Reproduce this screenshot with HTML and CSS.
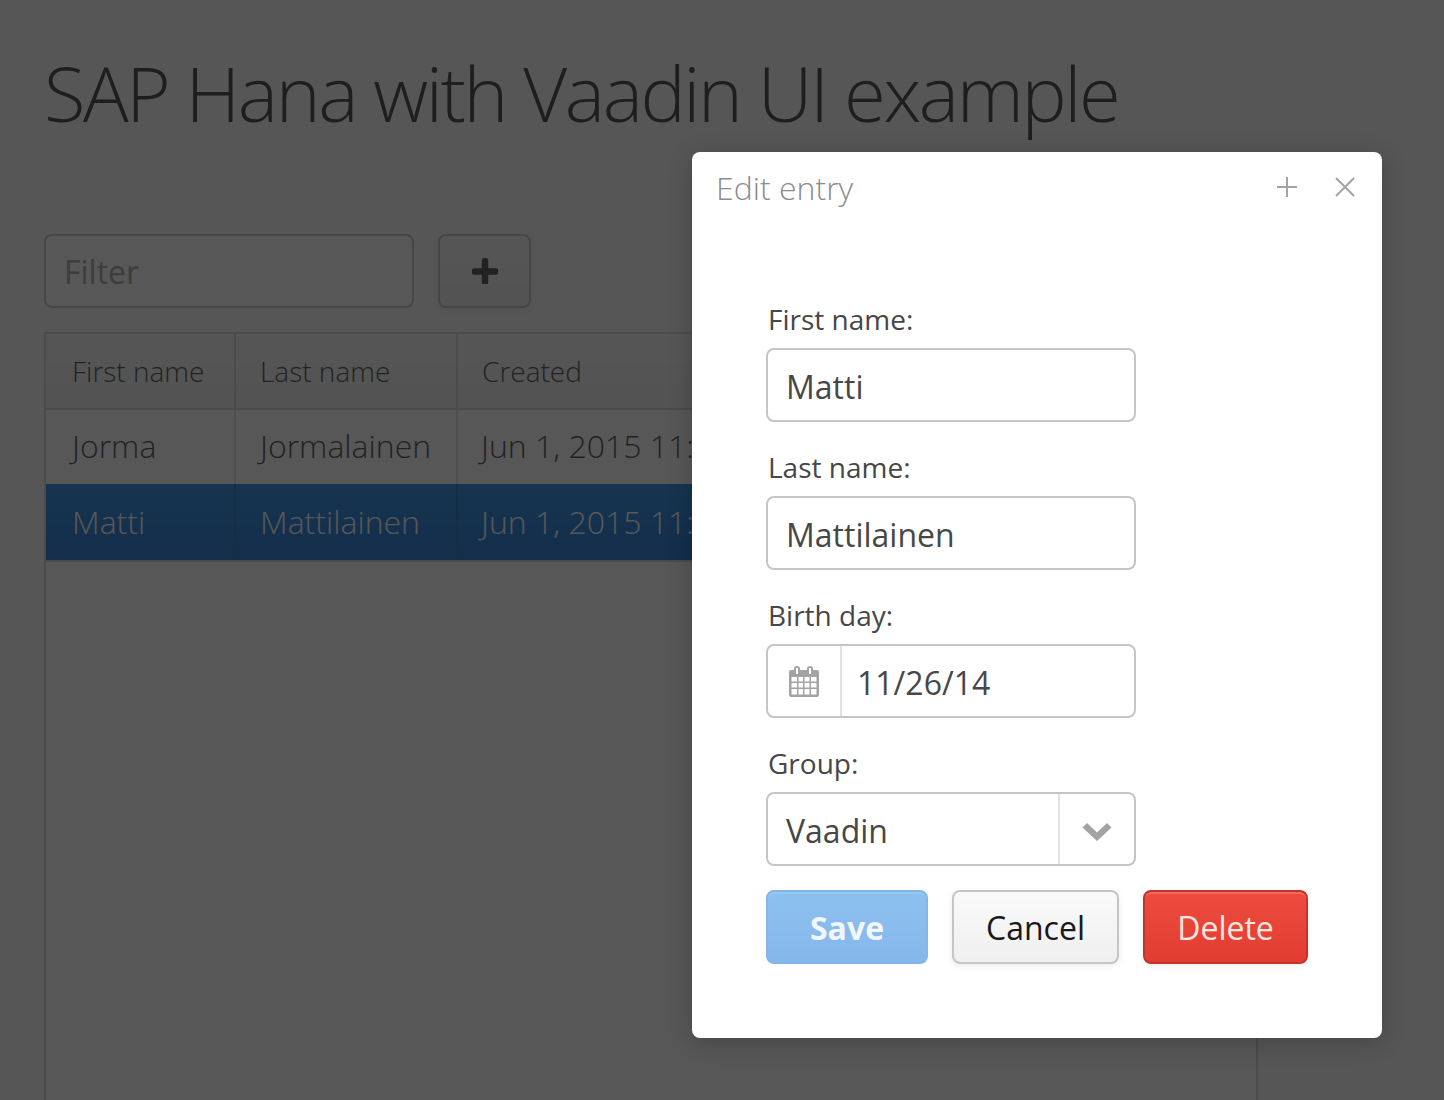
FILE: index.html
```html
<!DOCTYPE html>
<html lang="en">
<head>
<meta charset="utf-8">
<title>SAP Hana with Vaadin UI example</title>
<link rel="stylesheet" href="styles.css">
</head>
<body>
<main class="page">
  <h1 class="title">SAP Hana with Vaadin UI example</h1>
  <div class="toolbar">
    <div class="filter">Filter</div>
    <div class="add-btn">
      <svg width="26" height="26" viewBox="0 0 26 26"><path d="M13 3V24M2.500 13.500H23.500" fill="none" stroke="#474747" stroke-width="6.500" stroke-linecap="round"/></svg>
    </div>
  </div>
  <div class="table">
    <div class="row head">
      <div class="cell c1">First name</div><div class="cell c2">Last name</div><div class="cell c3">Created</div>
    </div>
    <div class="row body-row">
      <div class="cell c1">Jorma</div><div class="cell c2">Jormalainen</div><div class="cell c3">Jun 1, 2015 11:28:14 AM</div>
    </div>
    <div class="row body-row selected">
      <div class="cell c1">Matti</div><div class="cell c2">Mattilainen</div><div class="cell c3">Jun 1, 2015 11:28:14 AM</div>
    </div>
  </div>
</main>
<div class="curtain"></div>
<section class="dialog">
  <header class="dialog-head">
    <div class="dialog-title">Edit entry</div>
    <div class="dialog-tools">
      <svg width="22" height="22" viewBox="0 0 22 22"><path d="M11 1V21M1 11H21" fill="none" stroke="#a3a3a3" stroke-width="2"/></svg>
      <svg width="22" height="22" viewBox="0 0 22 22"><path d="M2 2L20 20M20 2L2 20" fill="none" stroke="#a3a3a3" stroke-width="2"/></svg>
    </div>
  </header>
  <div class="form">
    <div class="field">
      <div class="label">First name:</div>
      <div class="input"><span class="value">Matti</span></div>
    </div>
    <div class="field">
      <div class="label">Last name:</div>
      <div class="input"><span class="value">Mattilainen</span></div>
    </div>
    <div class="field">
      <div class="label">Birth day:</div>
      <div class="input date">
        <div class="date-btn">
          <svg width="30" height="31" viewBox="0 0 30 31">
            <path fill="#a3a3a3" d="M2 4H28A2 2 0 0 1 30 6V29A2 2 0 0 1 28 31H2A2 2 0 0 1 0 29V6A2 2 0 0 1 2 4Z"/>
            <rect x="5" y="0" width="6" height="9" rx="3" fill="#a3a3a3"/>
            <rect x="18" y="0" width="6" height="9" rx="3" fill="#a3a3a3"/>
            <rect x="7" y="2" width="2" height="6" fill="#fff"/>
            <rect x="20" y="2" width="2" height="6" fill="#fff"/>
            <path fill="#fff" d="M2.500 11H8V15.500H2.500ZM9.500 11H14V15.500H9.500ZM15.500 11H20.500V15.500H15.500ZM22 11H27.500V15.500H22ZM2.500 17H8V21.500H2.500ZM9.500 17H14V21.500H9.500ZM15.500 17H20.500V21.500H15.500ZM22 17H27.500V21.500H22ZM2.500 23H8V28.500H2.500ZM9.500 23H14V28.500H9.500ZM15.500 23H20.500V28.500H15.500ZM22 23H27.500V28.500H22Z"/>
          </svg>
        </div>
        <span class="value date-value">11/26/14</span>
      </div>
    </div>
    <div class="field">
      <div class="label">Group:</div>
      <div class="input select">
        <span class="value select-value">Vaadin</span>
        <div class="select-btn">
          <svg class="chevron" width="30" height="20" viewBox="0 0 30 20"><path d="M0.500 6.500L5 2L15 11.500L25 2L29.500 6.500L15 20Z" fill="#a3a3a3"/></svg>
        </div>
      </div>
    </div>
    <div class="actions">
      <div class="btn save">Save</div>
      <div class="btn cancel">Cancel</div>
      <div class="btn delete">Delete</div>
    </div>
  </div>
</section>
</body>
</html>
```
FILE: styles.css
```css
html, body {
  margin: 0;
  height: 1100px;
  overflow: hidden;
}
body {
  background: #fafafa;
  font-family: "Open Sans", sans-serif;
  color: #474747;
  position: relative;
}
.page {
  height: 1100px;
  padding: 0 186px 0 44px;
  box-sizing: border-box;
  overflow: hidden;
}
.title {
  margin: 0;
  padding: 43px 0 0 0;
  height: 234px;
  box-sizing: border-box;
  font-size: 76px;
  line-height: 100px;
  font-weight: 300;
  letter-spacing: -2.42px;
  color: #383838;
}
.toolbar {
  display: flex;
  gap: 24px;
  height: 74px;
  margin-bottom: 24px;
}
.filter {
  width: 370px;
  box-sizing: border-box;
  border: 2px solid #c5c5c5;
  border-radius: 8px;
  background: #fff;
  padding-left: 18px;
  font-size: 32px;
  line-height: 72px;
  color: #a3a3a3;
}
.add-btn {
  width: 93px;
  box-sizing: border-box;
  border: 2px solid #c5c5c5;
  border-radius: 8px;
  background: linear-gradient(#fafafa, #efefef);
  display: flex;
  align-items: center;
  justify-content: center;
  box-shadow: 0 2px 6px rgba(0,0,0,.08);
}
.table {
  height: 780px;
  border: 2px solid #d4d4d4;
  border-bottom: 0;
  box-sizing: border-box;
  background: #fff;
}
.row {
  display: grid;
  grid-template-columns: 190px 222px 1fr;
  height: 74px;
}
.head {
  height: 76px;
  background: linear-gradient(#fafafa, #efefef);
  border-bottom: 2px solid #d4d4d4;
  box-sizing: border-box;
}
.body-row {
  font-size: 32px;
  font-weight: 300;
}
.body-row + .body-row {
  height: 78px;
  border-bottom: 2px solid #d4d4d4;
  box-sizing: border-box;
}
.cell {
  border-right: 2px solid #e2e2e2;
  padding-left: 26px;
  white-space: nowrap;
  overflow: hidden;
  line-height: 72px;
}
.selected .cell { line-height: 76px; }
.c2 { padding-left: 24px; }
.c3 { border-right: 0; padding-left: 23px; }
.head .c3 { padding-left: 24px; }
.head .cell {
  font-size: 28px;
  font-weight: 300;
  line-height: 74px;
  border-right-color: #d4d4d4;
  color: #474747;
}
.selected {
  background: linear-gradient(#1b87e3, #166ed5);
  color: #fff;
}
.selected .cell { border-right-color: #1d6fc0; }
.curtain {
  position: absolute;
  inset: 0;
  background: rgba(20,20,20,.715);
}
.dialog {
  position: absolute;
  left: 692px;
  top: 152px;
  width: 690px;
  height: 886px;
  background: #fff;
  border-radius: 8px;
  box-shadow: 0 4px 24px rgba(0,0,0,.2);
}
.dialog-head {
  display: flex;
  justify-content: space-between;
  height: 74px;
  padding: 0 26px 0 24px;
}
.dialog-title {
  font-size: 32px;
  font-weight: 300;
  line-height: 72px;
  color: #8c8c8c;
}
.dialog-tools {
  display: flex;
  gap: 36px;
  align-items: center;
  padding-bottom: 4px;
}
.form {
  padding: 74px 0 0 74px;
}
.label {
  height: 48px;
  padding-left: 2px;
  font-size: 28px;
  line-height: 38px;
  color: #474747;
}
.input {
  width: 370px;
  height: 74px;
  box-sizing: border-box;
  border: 2px solid #c5c5c5;
  border-radius: 8px;
  margin-bottom: 26px;
  display: flex;
  align-items: center;
  font-size: 32px;
}
.value {
  padding: 4px 0 0 18px;
  line-height: 70px;
}
.date-btn {
  width: 72px;
  align-self: stretch;
  border-right: 2px solid #e2e2e2;
  display: flex;
  align-items: center;
  justify-content: center;
  flex: none;
}
.date-value { padding-left: 15px; }
.select-value { flex: 1; }
.select-btn {
  width: 74px;
  align-self: stretch;
  border-left: 2px solid #e2e2e2;
  display: flex;
  align-items: center;
  justify-content: center;
  flex: none;
}
.chevron { margin-top: 4px; }
.actions {
  display: flex;
  gap: 24px;
  margin-top: -2px;
}
.btn {
  height: 74px;
  box-sizing: border-box;
  border-radius: 8px;
  border: 2px solid;
  font-size: 32px;
  line-height: 72px;
  text-align: center;
  box-shadow: 0 2px 6px rgba(0,0,0,.08);
}
.save {
  width: 162px;
  font-weight: 700;
  color: #f2f7fd;
  background: linear-gradient(#8dc0f1, #86b7eb);
  border-color: #85b6e8;
  box-shadow: inset 0 2px 0 #97c7f3;
}
.cancel {
  width: 167px;
  color: #191919;
  background: linear-gradient(#fafafa, #efefef);
  border-color: #c5c5c5;
}
.delete {
  width: 165px;
  color: #fbe5e2;
  background: linear-gradient(#ed4c3f, #e13d30);
  border-color: #c4342a;
  box-shadow: inset 0 2px 0 #f2685c, 0 2px 6px rgba(0,0,0,.08);
}
```
